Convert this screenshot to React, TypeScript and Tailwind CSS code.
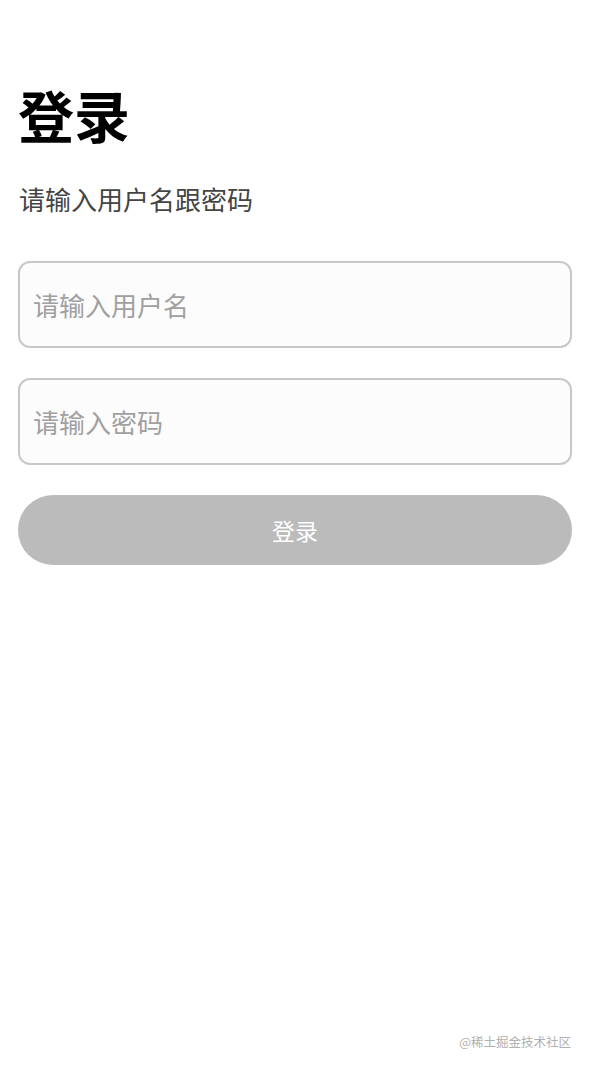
export default function App() {
  return (
    <div
      className="relative w-[590px] h-[1070px] bg-white px-[18px]"
      style={{ fontFamily: '"Noto Sans CJK SC", "Noto Sans", sans-serif' }}
    >
      <h1 className="pt-[76px] text-[56px] leading-[76px] font-bold text-black">
        登录
      </h1>
      <p className="mt-[30px] text-[26px] leading-[34px] text-[#444] pl-[1px]">
        请输入用户名跟密码
      </p>

      <div className="mt-[45px] flex flex-col gap-[30px]">
        <input
          placeholder="请输入用户名"
          className="h-[87px] w-full rounded-[12px] border-2 border-[#c8c8c8] bg-[#fcfcfc] px-[13px] text-[26px] outline-none placeholder:text-[#a0a0a0]"
        />
        <input
          type="password"
          placeholder="请输入密码"
          className="h-[87px] w-full rounded-[12px] border-2 border-[#c8c8c8] bg-[#fcfcfc] px-[13px] text-[26px] outline-none placeholder:text-[#a0a0a0]"
        />
        <button
          type="button"
          className="h-[70px] w-full rounded-full bg-[#bbbbbb] text-[23px] text-white"
        >
          登录
        </button>
      </div>

      <div className="absolute right-[19px] bottom-[18px] text-[12.5px] text-[#b0b0b0]">
        @稀土掘金技术社区
      </div>
    </div>
  );
}
